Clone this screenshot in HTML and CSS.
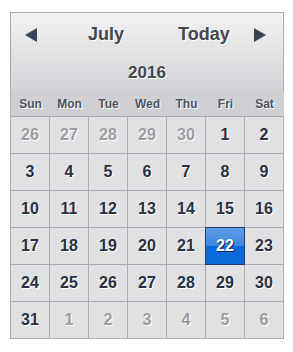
FILE: index.html
```html
<!DOCTYPE html>
<html lang="en">
<head>
    <meta charset="UTF-8">
    <title>Calendar</title>
    <link rel="stylesheet" href="styles.css">
</head>
<body>
    <div class="calendar">
        <div class="head">
            <div class="nav">
                <span class="arrow left"></span>
                <span class="month">July</span>
                <span class="today">Today</span>
                <span class="arrow right"></span>
            </div>
            <div class="year">2016</div>
        </div>
        <div class="weekdays">
            <span>Sun</span><span>Mon</span><span>Tue</span><span>Wed</span><span>Thu</span><span>Fri</span><span>Sat</span>
        </div>
        <div class="days">
            <span class="other">26</span><span class="other">27</span><span class="other">28</span><span class="other">29</span><span class="other">30</span><span>1</span><span>2</span>
            <span>3</span><span>4</span><span>5</span><span>6</span><span>7</span><span>8</span><span>9</span>
            <span>10</span><span>11</span><span>12</span><span>13</span><span>14</span><span>15</span><span>16</span>
            <span>17</span><span>18</span><span>19</span><span>20</span><span>21</span><span class="selected">22</span><span>23</span>
            <span>24</span><span>25</span><span>26</span><span>27</span><span>28</span><span>29</span><span>30</span>
            <span>31</span><span class="other">1</span><span class="other">2</span><span class="other">3</span><span class="other">4</span><span class="other">5</span><span class="other">6</span>
        </div>
    </div>
</body>
</html>
```
FILE: styles.css
```css
body{
    margin: 0;
    background: #fff;
    font-family: "Liberation Sans", Arial, sans-serif;
}
.calendar{
    margin: 12px 0 0 10px;
    width: 274px;
}
.head{
    height: 79px;
    border: 1px solid #a9abb2;
    border-bottom: none;
    background: linear-gradient(#f2f2f4, #d3d3d7);
}
.nav{
    display: flex;
    align-items: center;
    height: 43px;
}
.arrow{
    width: 0;
    height: 0;
    border-top: 7px solid transparent;
    border-bottom: 7px solid transparent;
}
.left{
    margin-left: 14px;
    border-right: 12px solid #364556;
}
.right{
    margin-left: 24px;
    border-left: 12px solid #364556;
}
.month, .today, .year{
    font-size: 18px;
    font-weight: bold;
    color: #45464c;
    text-shadow: 1px 1px 0 #fff;
}
.month{
    margin-left: 51px;
}
.today{
    margin-left: 54px;
}
.year{
    font-size: 17px;
    text-align: center;
    margin-top: 7px;
}
.weekdays{
    display: grid;
    grid-template-columns: repeat(7, 1fr);
    height: 24px;
    align-items: center;
    background: #d0d0d4;
    border-left: 1px solid #a9abb2;
}
.weekdays span{
    text-align: center;
    font-size: 12px;
    font-weight: bold;
    color: #4e5262;
    text-shadow: 1px 1px 0 #fff;
}
.days{
    display: grid;
    grid-template-columns: repeat(7, 38px);
    grid-auto-rows: 36px;
    gap: 1px;
    padding: 1px;
    background: #abacb3;
    width: 272px;
}
.days span{
    display: flex;
    align-items: center;
    justify-content: center;
    background: #e1e1e3;
    font-size: 16px;
    font-weight: bold;
    color: #283042;
    text-shadow: 1px 1px 0 #fff;
}
.days span.other{
    color: #9c9da3;
}
.days span.selected{
    background: linear-gradient(#5e9de6, #3c86e0 50%, #0a6adb 50%, #0a6ad9);
    box-shadow: 0 0 0 1px #203d66;
    color: #fff;
    text-shadow: 1px 1px 0 #1b2a44;
    position: relative;
}
```
